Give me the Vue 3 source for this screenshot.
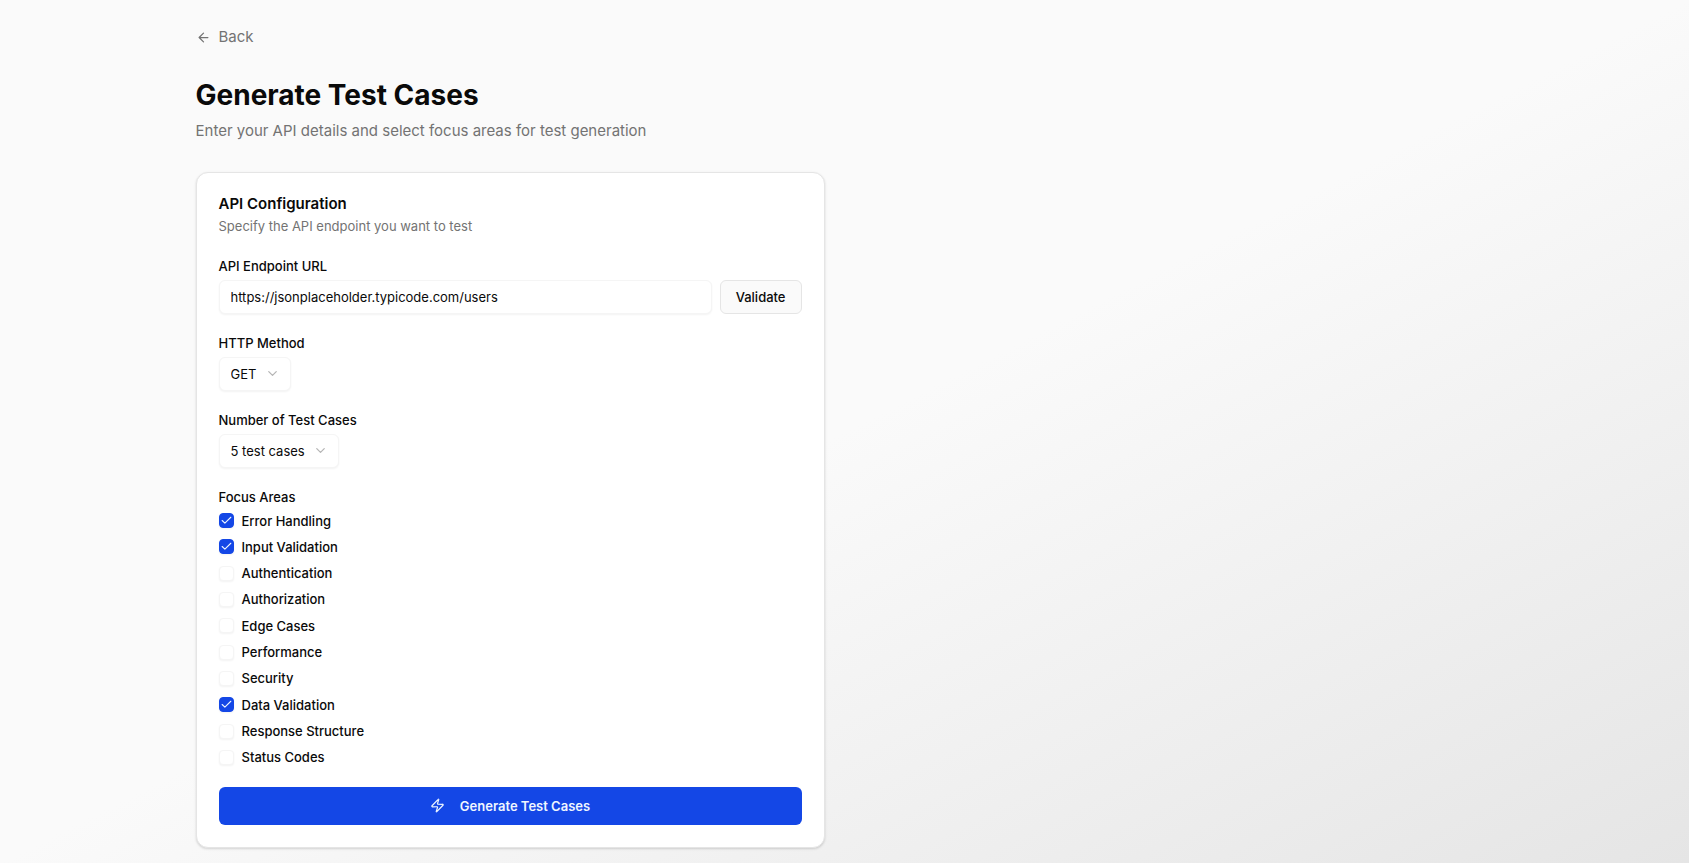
<script setup>
import { ref } from 'vue'

const url = ref('https://jsonplaceholder.typicode.com/users')
const method = ref('GET')
const count = ref(5)
const methods = ['GET', 'PUT']
const counts = [5, 3]
const areas = ref([
  { id: 'error-handling', label: 'Error Handling', on: true },
  { id: 'input-validation', label: 'Input Validation', on: true },
  { id: 'authentication', label: 'Authentication', on: false },
  { id: 'authorization', label: 'Authorization', on: false },
  { id: 'edge-cases', label: 'Edge Cases', on: false },
  { id: 'performance', label: 'Performance', on: false },
  { id: 'security', label: 'Security', on: false },
  { id: 'data-validation', label: 'Data Validation', on: true },
  { id: 'response-structure', label: 'Response Structure', on: false },
  { id: 'status-codes', label: 'Status Codes', on: false },
])
</script>

<template>
  <div class="page">
    <main class="container">
      <a class="back" href="#">
        <svg class="icon" viewBox="0 0 24 24" aria-hidden="true"><path d="m12 19-7-7 7-7M19 12H5" /></svg>
        Back
      </a>
      <header class="heading">
        <h1>Generate Test Cases</h1>
        <p>Enter your API details and select focus areas for test generation</p>
      </header>
      <div class="columns">
        <form class="card" @submit.prevent>
          <div class="card-head">
            <h2>API Configuration</h2>
            <p>Specify the API endpoint you want to test</p>
          </div>
          <div class="field">
            <label for="url">API Endpoint URL</label>
            <div class="url-row">
              <input id="url" v-model="url" class="control" type="text" />
              <button class="validate" type="button">Validate</button>
            </div>
          </div>
          <div class="field">
            <label for="method">HTTP Method</label>
            <div class="select">
              <select id="method" v-model="method" class="control">
                <option v-for="m in methods" :key="m" :value="m">{{ m }}</option>
              </select>
              <svg class="icon chevron" viewBox="0 0 24 24" aria-hidden="true"><path d="m6 9 6 6 6-6" /></svg>
            </div>
          </div>
          <div class="field">
            <label for="count">Number of Test Cases</label>
            <div class="select">
              <select id="count" v-model="count" class="control">
                <option v-for="n in counts" :key="n" :value="n">{{ n }} test cases</option>
              </select>
              <svg class="icon chevron" viewBox="0 0 24 24" aria-hidden="true"><path d="m6 9 6 6 6-6" /></svg>
            </div>
          </div>
          <fieldset class="focus">
            <legend>Focus Areas</legend>
            <div class="areas">
              <div v-for="a in areas" :key="a.id" class="area">
                <span class="check">
                  <input :id="a.id" v-model="a.on" type="checkbox" />
                  <svg v-if="a.on" class="tick" viewBox="0 0 24 24" aria-hidden="true"><path d="M20 6 9 17l-5-5" /></svg>
                </span>
                <label :for="a.id">{{ a.label }}</label>
              </div>
            </div>
          </fieldset>
          <button class="generate" type="submit">
            <svg class="icon" viewBox="0 0 24 24" aria-hidden="true">
              <path d="M4 14a1 1 0 0 1-.78-1.63l9.9-10.2a.5.5 0 0 1 .86.46l-1.92 6.02A1 1 0 0 0 13 10h7a1 1 0 0 1 .78 1.63l-9.9 10.2a.5.5 0 0 1-.86-.46l1.92-6.02A1 1 0 0 0 11 14z" />
            </svg>
            Generate Test Cases
          </button>
        </form>
      </div>
    </main>
  </div>
</template>

<style>
body {
  margin: 0;
}
</style>

<style scoped>
.page {
  box-sizing: border-box;
  min-height: 100vh;
  padding: 26px 22px 14px;
  background: linear-gradient(to bottom right, #fafafa, #fafafa 50%, #e5e5e5);
  color: #0a0a0a;
  font-family: Inter, "Liberation Sans", sans-serif;
  font-size: 13px;
  line-height: 20px;
}
.container {
  max-width: 1298px;
  margin: 0 auto;
}
h1, h2, p {
  margin: 0;
}
.icon {
  width: 15px;
  height: 15px;
  flex: none;
  fill: none;
  stroke: currentColor;
  stroke-width: 2;
  stroke-linecap: round;
  stroke-linejoin: round;
}
.back {
  display: inline-flex;
  align-items: center;
  gap: 8px;
  color: #737373;
  font-size: 15px;
  line-height: 22px;
  text-decoration: none;
}
.heading {
  margin: 28px 0 30px;
}
h1 {
  font-size: 28px;
  font-weight: 700;
  line-height: 34px;
}
.heading p {
  margin-top: 8px;
  color: #737373;
  font-size: 15px;
  line-height: 22px;
}
.columns {
  display: grid;
  grid-template-columns: 1fr 1fr;
  gap: 40px;
}
.card {
  padding: 22px;
  border: 1px solid #e5e5e5;
  border-radius: 12px;
  background: #fff;
  box-shadow: 0 1px 3px rgba(0, 0, 0, 0.1), 0 1px 2px rgba(0, 0, 0, 0.06);
}
.card-head {
  margin-bottom: 23px;
}
h2 {
  font-size: 15px;
  font-weight: 600;
  line-height: 18px;
}
.card-head p {
  margin-top: 3px;
  color: #737373;
}
.field {
  display: flex;
  flex-direction: column;
  gap: 7px;
  margin-bottom: 22px;
}
.field > label,
legend {
  font-weight: 500;
  line-height: 14px;
}
.url-row {
  display: flex;
  gap: 8px;
}
.control {
  box-sizing: border-box;
  height: 34px;
  border: 1px solid #f5f5f5;
  border-radius: 6px;
  background: #fff;
  box-shadow: 0 1px 2px rgba(0, 0, 0, 0.05);
  color: inherit;
  font: inherit;
}
input.control {
  flex: 1;
  min-width: 0;
  padding: 0 11px;
}
.validate {
  height: 34px;
  padding: 0 15px;
  border: 1px solid #e5e5e5;
  border-radius: 6px;
  background: #fafafa;
  color: inherit;
  font: inherit;
  font-weight: 500;
}
.select {
  position: relative;
  align-self: flex-start;
}
select.control {
  appearance: none;
  padding: 0 32px 0 11px;
}
.chevron {
  position: absolute;
  top: 9px;
  right: 11px;
  color: #b5b5b5;
  pointer-events: none;
}
.focus {
  min-width: 0;
  margin: 0 0 20px;
  padding: 0;
  border: 0;
}
legend {
  padding: 0;
}
.areas {
  display: flex;
  flex-direction: column;
  justify-content: space-between;
  min-height: 255px;
  padding-top: 8px;
}
.area {
  display: flex;
  align-items: center;
  gap: 8px;
  font-weight: 500;
  line-height: 18px;
}
.check {
  position: relative;
  display: flex;
}
.check input {
  appearance: none;
  box-sizing: border-box;
  width: 15px;
  height: 15px;
  margin: 0;
  border: 1px solid #f5f5f5;
  border-radius: 4px;
  background: #fff;
  box-shadow: 0 1px 2px rgba(0, 0, 0, 0.05);
}
.check input:checked {
  border-color: #1447e6;
  background: #1447e6;
}
.tick {
  position: absolute;
  inset: 1px;
  fill: none;
  stroke: #eff6ff;
  stroke-width: 2;
  stroke-linecap: round;
  stroke-linejoin: round;
  pointer-events: none;
}
.generate {
  display: flex;
  align-items: center;
  justify-content: center;
  gap: 15px;
  width: 100%;
  height: 38px;
  border: 0;
  border-radius: 6px;
  background: #1447e6;
  color: #eff6ff;
  font: inherit;
  font-weight: 600;
}
</style>
